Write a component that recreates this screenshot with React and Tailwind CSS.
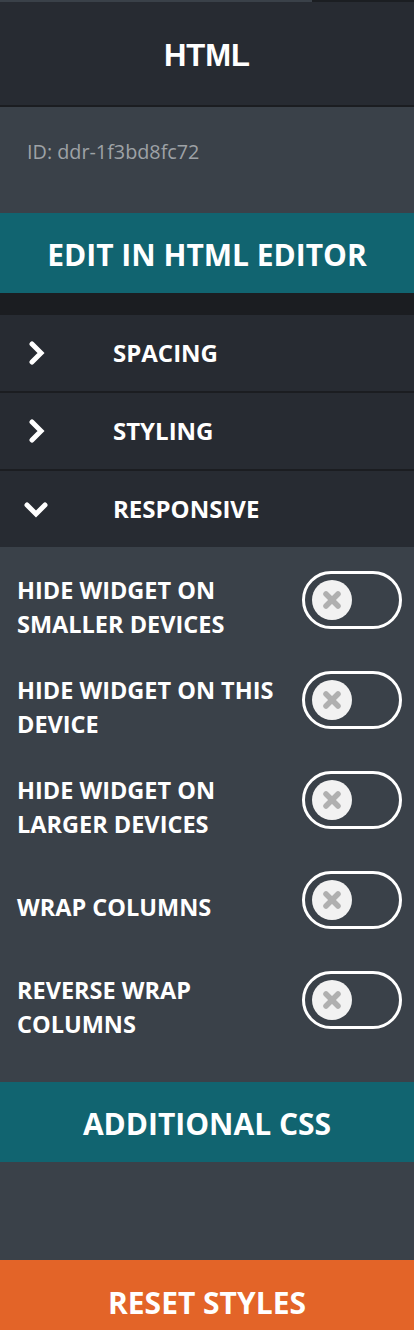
import React from "react";

const Chevron = ({ down }) => (
  <svg width="24" height="24" viewBox="0 0 24 24" className="block">
    {down ? (
      <polyline points="3,8 12,17 21,8" fill="none" stroke="#fff" strokeWidth="5" strokeLinecap="round" strokeLinejoin="miter" />
    ) : (
      <polyline points="8,3 17,12 8,21" fill="none" stroke="#fff" strokeWidth="5" strokeLinecap="round" strokeLinejoin="miter" />
    )}
  </svg>
);

const Toggle = () => (
  <div className="w-[100px] h-[58px] rounded-full border-[3px] border-white flex items-center pl-[7px] shrink-0">
    <div className="w-[40px] h-[40px] rounded-full bg-[#f2f2f2] flex items-center justify-center">
      <svg width="20" height="20" viewBox="0 0 20 20">
        <line x1="4" y1="4" x2="16" y2="16" stroke="#b0b0b0" strokeWidth="5.5" strokeLinecap="round" />
        <line x1="16" y1="4" x2="4" y2="16" stroke="#b0b0b0" strokeWidth="5.5" strokeLinecap="round" />
      </svg>
    </div>
  </div>
);

const Row = ({ label, open, last }) => (
  <div className={`flex items-center bg-[#272b32] ${last ? "h-[76px]" : "h-[78px] border-b-2 border-[#1b1d21]"}`}>
    <div className="w-[72px] flex justify-center">
      <Chevron down={open} />
    </div>
    <div className="ml-[41px] text-white font-bold text-[24px] leading-none">{label}</div>
  </div>
);

const ToggleRow = ({ label }) => (
  <div className="h-[58px] flex items-center justify-between pl-[17px] pr-[12px]">
    <div className="text-white font-bold text-[23.5px] leading-[34px] w-[276px] mt-[13px]">{label}</div>
    <Toggle />
  </div>
);

export default function App() {
  return (
    <div className="w-[414px] h-[1330px] bg-[#3a4149] flex flex-col" style={{ fontFamily: '"Open Sans", "Liberation Sans", sans-serif' }}>
      <div className="h-[2px] flex">
        <div className="w-[312px] bg-[#3a4149]" />
        <div className="flex-1 bg-[#1b1e22]" />
      </div>
      <div className="h-[105px] bg-[#272b32] border-b-2 border-[#1b1d21] flex items-center justify-center pt-[3px]">
        <span className="text-white font-bold text-[31px] leading-none" style={{ fontFamily: '"Liberation Sans", Arial, sans-serif' }}>HTML</span>
      </div>
      <div className="h-[106px] bg-[#3a4149] pl-[27px] pt-[32px]">
        <span className="text-[#9ea2a6] text-[19.8px] leading-[26px]">ID: ddr-1f3bd8fc72</span>
      </div>
      <div className="h-[80px] bg-[#116470] flex items-center justify-center pt-[4px]">
        <span className="text-white font-bold text-[30px] leading-none">EDIT IN HTML EDITOR</span>
      </div>
      <div className="h-[22px] bg-[#1b1d21]" />
      <Row label="SPACING" />
      <Row label="STYLING" />
      <Row label="RESPONSIVE" open last />
      <div className="h-[535px] bg-[#3a4149] pt-[24px] flex flex-col gap-[42px]">
        <ToggleRow label="HIDE WIDGET ON SMALLER DEVICES" />
        <ToggleRow label="HIDE WIDGET ON THIS DEVICE" />
        <ToggleRow label="HIDE WIDGET ON LARGER DEVICES" />
        <ToggleRow label="WRAP COLUMNS" />
        <ToggleRow label="REVERSE WRAP COLUMNS" />
      </div>
      <div className="h-[80px] bg-[#116470] flex items-center justify-center pt-[3px]">
        <span className="text-white font-bold text-[30px] leading-none">ADDITIONAL CSS</span>
      </div>
      <div className="h-[98px] bg-[#3a4149]" />
      <div className="h-[70px] bg-[#e36428] flex items-start justify-center pt-[28px]">
        <span className="text-white font-bold text-[30px] leading-none">RESET STYLES</span>
      </div>
    </div>
  );
}
